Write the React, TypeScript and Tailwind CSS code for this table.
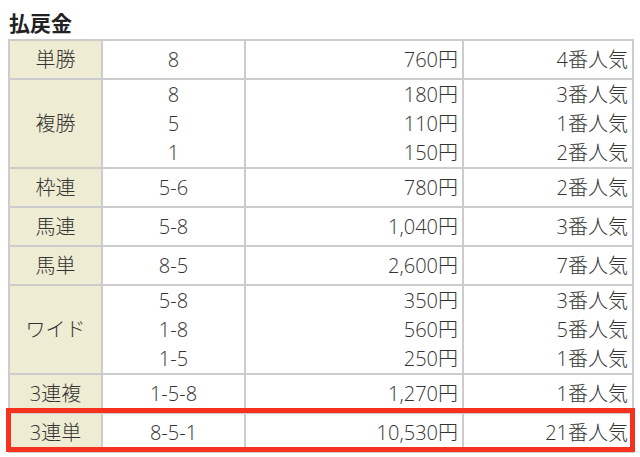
import React from "react";

type Row = { name: string; nums: string[]; pays: string[]; pops: string[] };

const rows: Row[] = [
  { name: "単勝", nums: ["8"], pays: ["760円"], pops: ["4番人気"] },
  { name: "複勝", nums: ["8", "5", "1"], pays: ["180円", "110円", "150円"], pops: ["3番人気", "1番人気", "2番人気"] },
  { name: "枠連", nums: ["5-6"], pays: ["780円"], pops: ["2番人気"] },
  { name: "馬連", nums: ["5-8"], pays: ["1,040円"], pops: ["3番人気"] },
  { name: "馬単", nums: ["8-5"], pays: ["2,600円"], pops: ["7番人気"] },
  { name: "ワイド", nums: ["5-8", "1-8", "1-5"], pays: ["350円", "560円", "250円"], pops: ["3番人気", "5番人気", "1番人気"] },
  { name: "3連複", nums: ["1-5-8"], pays: ["1,270円"], pops: ["1番人気"] },
  { name: "3連単", nums: ["8-5-1"], pays: ["10,530円"], pops: ["21番人気"] },
];

function Lines({ items }: { items: string[] }) {
  return (
    <>
      {items.map((t, i) => (
        <div key={i}>{t}</div>
      ))}
    </>
  );
}

export default function App() {
  return (
    <div
      className="relative w-[640px] h-[457px] bg-white text-[#333]"
      style={{ fontFamily: '"Noto Sans CJK JP", "Noto Sans", sans-serif' }}
    >
      <div className="pl-[9px] pt-[8px] h-[39px] text-[21px] leading-[28px] font-bold text-[#222]">
        払戻金
      </div>
      <table
        className="ml-[8px] w-[624px] table-fixed border-collapse text-[20px] leading-[29px] font-light"
        style={{ fontFamily: '"Open Sans", "Noto Sans CJK JP", sans-serif' }}
      >
        <colgroup>
          <col className="w-[93px]" />
          <col className="w-[143px]" />
          <col className="w-[218px]" />
          <col className="w-[170px]" />
        </colgroup>
        <tbody>
          {rows.map((r) => {
            const pad = r.nums.length > 1 ? "py-0" : "py-[4px]";
            return (
              <tr key={r.name}>
                <td className={`border-2 border-[#cccccc] bg-[#eeecd2] text-center ${pad}`}>{r.name}</td>
                <td className={`border-2 border-[#cccccc] text-center ${pad}`}>
                  <Lines items={r.nums} />
                </td>
                <td className={`border-2 border-[#cccccc] text-right pr-[4px] ${pad}`}>
                  <Lines items={r.pays} />
                </td>
                <td className={`border-2 border-[#cccccc] text-right pr-[4px] ${pad}`}>
                  <Lines items={r.pops} />
                </td>
              </tr>
            );
          })}
        </tbody>
      </table>
      <div className="absolute left-[6px] top-[408px] w-[629px] h-[44px] border-[5px] border-[#f6321e] pointer-events-none" />
    </div>
  );
}
